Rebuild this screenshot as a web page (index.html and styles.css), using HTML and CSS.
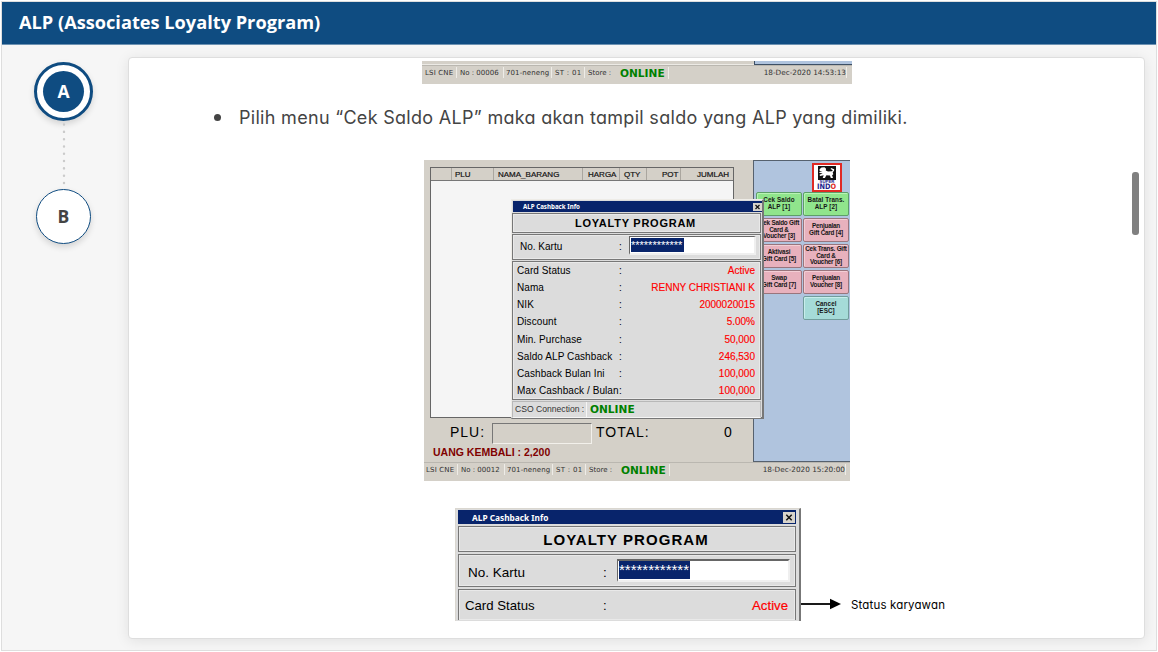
FILE: index.html
```html
<!DOCTYPE html>
<html lang="id">
<head>
<meta charset="utf-8">
<title>ALP (Associates Loyalty Program)</title>
<link rel="stylesheet" href="styles.css">
</head>
<body>
<div class="frame">
  <header class="header">ALP (Associates Loyalty Program)</header>
  <div class="body">
    <nav class="rail">
      <div class="step active"><span>A</span></div>
      <svg class="dots" width="4" height="68"><line x1="2" y1="3.5" x2="2" y2="68" stroke="#cbcbcb" stroke-width="2.4" stroke-linecap="round" stroke-dasharray="0.1 7.2"/></svg>
      <div class="step"><span>B</span></div>
    </nav>
    <main class="card">
      <div class="scrollthumb"></div>
      <div class="strip">
        <div class="strip-top"><i></i></div>
        <div class="status">
          <span class="s1">LSI CNE</span><span class="s2">No : 00006</span><span class="s3">701-neneng</span><span class="s4">ST : 01</span><span class="s5">Store :</span><b>ONLINE</b><span class="date">18-Dec-2020 14:53:13</span>
        </div>
      </div>
      <div class="bullet"><i></i><p>Pilih menu “Cek Saldo ALP” maka akan tampil saldo yang ALP yang dimiliki.</p></div>

      <section class="pos">
        <div class="pos-main">
          <div class="left">
            <div class="grid">
              <div class="cols"><span></span><span>PLU</span><span>NAMA_BARANG</span><span>HARGA</span><span>QTY</span><span>POT</span><span>JUMLAH</span></div>
            </div>
            <div class="totals"><span class="plu">PLU:</span><span class="field"></span><span class="total">TOTAL:</span><span class="zero">0</span></div>
            <div class="change">UANG KEMBALI : 2,200</div>
          </div>
          <div class="side">
            <svg class="logo" width="30" height="29" viewBox="0 0 30 29">
              <rect x="1" y="1" width="28" height="27" fill="#fff" stroke="#e02a24" stroke-width="2"/>
              <rect x="6" y="3" width="18" height="14" fill="#111"/>
              <path d="M7.500 6.200l2-1.700 3-.3 1.600 1.500-.3 1.800 2.200.9 3.800-.2 1-1-2.300-1.200.7-1 3 1.300-.2 1.800-1.300 1 .6 2.200-1.200 1 .9 2.700h-2.200l-.9-2.500-3.500-.3-1.500 2.800h-2.200l1-2.800-3.700.9-.5-1.300 3.200-1.500-3.200-.2-.2-1.200 3.200-.7-2.800-.3z" fill="#fff"/>
              <text x="15" y="20.300" class="super" textLength="15" lengthAdjust="spacingAndGlyphs">SUPER</text>
              <text x="5" y="26" class="indo" textLength="19" lengthAdjust="spacingAndGlyphs">IND<tspan fill="#e02a24">O</tspan></text>
            </svg>
            <div class="keys">
              <div class="key green k1">Cek Saldo<br>ALP [1]</div><div class="key green k2">Batal Trans.<br>ALP [2]</div>
              <div class="key">Cek Saldo Gift<br>Card &amp;<br>Voucher [3]</div><div class="key">Penjualan<br>Gift Card [4]</div>
              <div class="key">Aktivasi<br>Gift Card [5]</div><div class="key">Cek Trans. Gift<br>Card &amp;<br>Voucher [6]</div>
              <div class="key">Swap<br>Gift Card [7]</div><div class="key">Penjualan<br>Voucher [8]</div>
              <div class="gap"></div><div class="key teal">Cancel<br>[ESC]</div>
            </div>
          </div>
        </div>
        <div class="status">
          <span class="s1">LSI CNE</span><span class="s2">No : 00012</span><span class="s3">701-neneng</span><span class="s4">ST : 01</span><span class="s5">Store :</span><b>ONLINE</b><span class="date">18-Dec-2020 15:20:00</span>
        </div>
        <div class="dialog">
          <div class="titlebar"><span>ALP Cashback Info</span><svg class="x" width="9" height="8" viewBox="0 0 9 8"><rect width="9" height="8" fill="#d8d4cc"/><path d="M2.500 2l4 4M6.500 2l-4 4" stroke="#111" stroke-width="1.200"/></svg></div>
          <div class="box heading">LOYALTY PROGRAM</div>
          <div class="box card-no"><span>No. Kartu</span><em>:</em><div class="input"><mark>************</mark></div></div>
          <div class="box details">
            <div class="row"><span>Card Status</span><em>:</em><b>Active</b></div>
            <div class="row"><span>Nama</span><em>:</em><b>RENNY CHRISTIANI K</b></div>
            <div class="row"><span>NIK</span><em>:</em><b>2000020015</b></div>
            <div class="row"><span>Discount</span><em>:</em><b>5.00%</b></div>
            <div class="row"><span>Min. Purchase</span><em>:</em><b>50,000</b></div>
            <div class="row"><span>Saldo ALP Cashback</span><em>:</em><b>246,530</b></div>
            <div class="row"><span>Cashback Bulan Ini</span><em>:</em><b>100,000</b></div>
            <div class="row"><span>Max Cashback / Bulan</span><em>:</em><b>100,000</b></div>
          </div>
          <div class="cso"><span>CSO Connection :</span><b>ONLINE</b></div>
        </div>
      </section>

      <div class="closeup">
        <div class="dialog2">
          <div class="titlebar"><span>ALP Cashback Info</span><svg class="x" width="12" height="11" viewBox="0 0 12 11"><rect width="12" height="11" fill="#d8d4cc"/><path d="M3.300 2.800l5.400 5.400M8.700 2.800l-5.400 5.400" stroke="#111" stroke-width="1.500"/></svg></div>
          <div class="box heading">LOYALTY PROGRAM</div>
          <div class="box card-no"><span>No. Kartu</span><em>:</em><div class="input"><mark>************</mark></div></div>
          <div class="box last"><span>Card Status</span><em>:</em><b>Active</b></div>
        </div>
        <svg class="arrow" width="40" height="12"><path d="M0 6h31" stroke="#000" stroke-width="1.800"/><path d="M29 .8l11 5.200-11 5.200z"/></svg>
        <span class="note">Status karyawan</span>
      </div>
    </main>
  </div>
</div>
</body>
</html>
```
FILE: styles.css
```css
* { box-sizing: border-box; }
body { margin: 0; width: 1158px; height: 652px; padding: 1px; background: #fff; overflow: hidden; font-family: "Liberation Sans", Arial, sans-serif; }
i, em { font-style: normal; }
.frame { width: 1156px; height: 650px; border: 1px solid #dedede; background: #f6f6f6; }
.header { height: 43px; padding-left: 17px; background: #0f4c81; border-bottom: 1px solid #6d92b2; color: #fff; font: bold 18.200px/40px "Open Sans", "Noto Sans", sans-serif; }
.body { display: flex; height: 605px; overflow: hidden; }

.rail { width: 123px; margin-right: 3px; padding-top: 17px; display: flex; flex-direction: column; align-items: center; }
.step { width: 55px; height: 55px; border-radius: 50%; border: 1px solid #0f4c81; background: #fff; color: #444; display: flex; align-items: center; justify-content: center; font: bold 17.500px/1 "Open Sans", sans-serif; box-shadow: 0 3px 6px rgba(0,0,0,.14); }
.step.active { width: 59px; height: 59px; border-width: 3px; padding: 6px; color: #fff; }
.active span { width: 41px; height: 41px; border-radius: 50%; background: #0f4c81; display: flex; align-items: center; justify-content: center; padding-top: 1px; }
.dots { display: block; }

.card { position: relative; width: 1017px; height: 582px; margin-top: 12px; border: 1px solid #dedede; border-radius: 4px; background: #fff; box-shadow: 0 2px 14px rgba(0,0,0,.09); overflow: hidden; padding-top: 3px; }
.scrollthumb { position: absolute; left: 1003px; top: 114px; width: 7px; height: 63px; border-radius: 3px; background: #808080; }

.strip { margin-left: 293px; width: 430px; height: 23px; background: #d4d0c8; }
.strip-top { height: 4px; display: flex; justify-content: flex-end; border-bottom: 1px solid #eceae5; }
.strip-top i { width: 98px; height: 4px; background: #b0c4de; border-bottom: 1px solid #3d5066; border-left: 1px solid #3d5066; }
.strip .status { height: 19px; padding-left: 3px; }

.status { height: 20px; display: flex; align-items: flex-start; padding: 1px 4px 0 2px; background: #d4d0c8; color: #333; font: 7px/12px "DejaVu Sans", sans-serif; white-space: nowrap; border-top: 1px solid #bab7b0; }
.status span { border-right: 1px solid #eeece7; height: 11px; }
.s1 { width: 32px; letter-spacing: .15px; } .s2 { width: 47px; padding-left: 3px; } .s3 { width: 48px; padding-left: 2px; letter-spacing: .1px; } .s4 { width: 33px; padding-left: 3px; letter-spacing: .3px; } .s5 { width: 35px; padding-left: 3px; }
.status .s5 { border-right: 0; }
.status b { font-size: 10.600px; color: #008000; width: 49px; border-right: 1px solid #eeece7; height: 12px; line-height: 13px; }
.status .date { margin-left: auto; font-size: 7.300px; padding-right: 0; }
.strip .status { padding-right: 5px; }

.bullet { height: 76px; padding: 21px 0 0 85px; display: flex; color: #444; }
.bullet i { width: 7px; height: 7px; border-radius: 50%; background: #444; margin: 9px 18px 0 0; }
.bullet p { margin: 0; font: 18px/26px Inter, Lato, sans-serif; font-feature-settings: "cv11"; letter-spacing: .3px; white-space: nowrap; }

.pos { position: relative; margin-left: 295px; width: 426px; height: 321px; background: #d4d0c8; }
.pos-main { display: flex; height: 302px; }
.pos > .status { height: 19px; }
.left { width: 329px; padding: 7px 0 0 6px; }
.grid { width: 304px; height: 251px; background: #f5f5f5; border: 1px solid #666; }
.cols { display: flex; height: 13px; background: #d4d0c8; border-bottom: 1px solid #777; font-size: 8px; line-height: 13px; color: #111; -webkit-text-stroke: .2px #111; }
.cols span { border-right: 1px solid #aaa69f; padding-left: 4px; }
.cols span:nth-child(1) { width: 21px; } .cols span:nth-child(2) { width: 42px; padding-left: 3px; } .cols span:nth-child(3) { width: 89px; }
.cols span:nth-child(4) { width: 37px; padding-left: 5px; } .cols span:nth-child(5) { width: 27px; } .cols span:nth-child(6) { width: 34px; padding-left: 15px; } .cols span:nth-child(7) { flex: 1; padding-left: 16px; border: 0; }
.totals { display: flex; height: 26px; padding: 5px 0 0 20px; font-size: 14px; line-height: 19px; letter-spacing: 1px; }
.plu { width: 42px; } .total { width: 128px; }
.field { width: 100px; height: 21px; border: 1px solid #777; border-right-color: #f2f0eb; border-bottom-color: #f2f0eb; margin-right: 4px; }
.change { padding: 2px 0 0 3px; font-size: 10.500px; line-height: 13px; font-weight: bold; color: #800000; }
.side { width: 97px; background: #b0c4de; border: 1px solid #56616e; border-right: 0; padding: 2px 1px 0 2px; }
.logo { display: block; margin-left: 56px; }
.super { font: bold 4px "Liberation Sans", sans-serif; fill: #23238e; text-anchor: middle; }
.indo { font: bold 7.500px "DejaVu Sans", sans-serif; fill: #23238e; }
.keys { display: grid; grid-template-columns: 46px 46px; grid-auto-rows: 24px; gap: 2px 1px; }
.key { border: 1px solid #99757d; border-radius: 2px; background: #e8b1bd; box-shadow: inset 1px 1px #f3ced5; font: bold 6.300px/6.600px "Liberation Sans", sans-serif; letter-spacing: -.2px; color: #161616; white-space: nowrap; display: flex; align-items: center; justify-content: center; text-align: center; }
.green { background: #90e58c; border-color: #5d9f68; box-shadow: inset 1px 1px #b8f3b4; letter-spacing: .1px; }
.teal { background: #a5dbd8; border-color: #719d9c; box-shadow: inset 1px 1px #c8edeb; letter-spacing: .1px; }

.dialog { position: absolute; left: 87px; top: 39px; width: 253px; height: 220px; background: #dcdcdc; border: 1px solid #eeece7; border-right: 2px solid #777; border-bottom: 2px solid #777; padding: 1px 1px 0 0; }
.titlebar { display: flex; justify-content: space-between; align-items: center; background: #08246b; color: #fff; font: bold 6.200px/11px "Noto Sans", sans-serif; }
.dialog .titlebar { height: 11px; padding: 0 0 0 10px; margin: 0 -1px 1px 1px; }
.box { border: 1px solid #777; box-shadow: inset 0 0 0 1px #e9e9e9; }
.dialog .box { margin-bottom: 1px; font-size: 10px; }
.dialog .heading { height: 20px; line-height: 18px; font-size: 11px; font-weight: bold; letter-spacing: .75px; text-align: center; padding-right: 2px; }
.card-no { display: flex; }
.dialog .card-no { height: 26px; padding: 1px 4px 0 7px; line-height: 21px; }
.dialog .card-no span { width: 99px; } .dialog .card-no em { width: 10px; }
.input { flex: 1; background: #fff; border: 1px solid #666; border-right: 2px solid #efefef; border-bottom: 2px solid #efefef; }
.dialog .input { height: 19px; }
mark { display: block; background: #08246b; color: #fff; overflow: hidden; }
.dialog mark { width: 53px; height: 14px; margin: 1px 0 0 1px; font-size: 11px; line-height: 15px; }
.dialog .details { height: 139px; padding: 0 5px 0 4px; }
.row { display: flex; height: 17.150px; line-height: 18px; white-space: nowrap; }
.row span { width: 102px; letter-spacing: .08px; } .row b { margin-left: auto; font-weight: normal; color: #f00; -webkit-text-stroke: .15px #f00; }
.cso { display: flex; height: 17px; border: 1px solid #b8b8b8; border-bottom-color: #f5f5f5; padding-left: 2px; font-size: 8.600px; line-height: 14px; color: #333; white-space: nowrap; }
.cso span { width: 72px; border-right: 1px solid #f5f5f5; margin-right: 3px; }
.cso b { font: bold 10.600px/15px "DejaVu Sans", sans-serif; color: #008000; }

.closeup { display: flex; margin: 27px 0 0 326px; height: 113px; }
.dialog2 { width: 346px; height: 113px; background: #dcdcdc; border: 1px solid #dad7d0; border-right: 2px solid #777; border-bottom: 0; padding: 1px 3px 0 2px; }
.dialog2 .titlebar { height: 14px; font-size: 8.300px; padding: 0 1px 0 14px; margin-bottom: 2px; }
.dialog2 .box { margin-bottom: 2px; }
.dialog2 .heading { height: 26px; font-size: 15px; line-height: 25px; font-weight: bold; letter-spacing: 1.050px; text-align: center; padding-right: 2px; }
.dialog2 .card-no { height: 33px; padding: 4px 5px 0 9px; font-size: 13.500px; line-height: 27px; }
.dialog2 .card-no span { width: 135px; } .dialog2 .card-no em { width: 14px; }
.dialog2 .input { height: 23px; border-top-width: 2px; }
.dialog2 mark { width: 71px; height: 18px; font-size: 15px; line-height: 18px; margin-left: 1px; }
.dialog2 .last { display: flex; height: 31px; border-bottom: 0; margin: 0; padding: 0 7px 0 6px; font-size: 13.200px; line-height: 31px; }
.last span { width: 138px; } .last b { margin-left: auto; color: #f00; font-weight: normal; -webkit-text-stroke: .2px #f00; }
.arrow { margin-top: 90px; }
.note { padding: 89px 0 0 10px; font: 11.500px/16px Inter, sans-serif; font-feature-settings: "cv11"; letter-spacing: .15px; white-space: nowrap; }
```
